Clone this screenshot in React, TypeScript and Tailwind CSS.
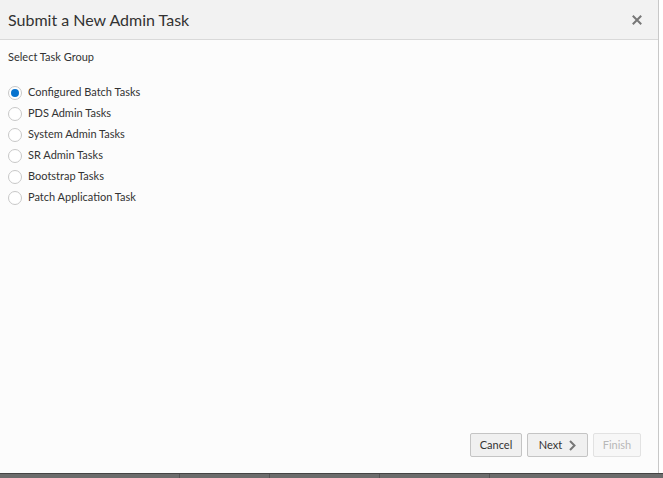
import { useState } from 'react'

const groups = [
  'Configured Batch Tasks',
  'PDS Admin Tasks',
  'System Admin Tasks',
  'SR Admin Tasks',
  'Bootstrap Tasks',
  'Patch Application Task',
]

function Radio({ checked }: { checked: boolean }) {
  return (
    <span className="flex h-[14px] w-[14px] items-center justify-center rounded-full border border-[#c8c8c8] bg-white">
      {checked && <span className="h-[8px] w-[8px] rounded-full bg-[#0572ce]" />}
    </span>
  )
}

export default function App() {
  const [selected, setSelected] = useState(0)

  return (
    <div
      className="flex h-[478px] w-[663px] flex-col overflow-hidden bg-white text-[#333]"
      style={{ fontFamily: 'Lato, "Open Sans", sans-serif' }}
    >
      <div className="flex h-[473px] w-[659px] flex-col border-r border-[#c8c8c8] bg-[#fcfcfc]">
        <div className="flex h-[40px] shrink-0 items-center justify-between border-b border-[#d9d9d9] bg-[#f2f2f2] pl-2 pr-[16px]">
          <h1 className="text-[16px] leading-none text-[#333]">Submit a New Admin Task</h1>
          <button>
            <svg width="10" height="10" viewBox="0 0 10 10">
              <path d="M1.5 1.5 L8.5 8.5 M8.5 1.5 L1.5 8.5" stroke="#777" strokeWidth="2" strokeLinecap="square" />
            </svg>
          </button>
        </div>

        <div className="flex flex-1 flex-col px-2 pt-[10px]">
          <p className="text-[11px] leading-[14px]">Select Task Group</p>
          <div className="mt-[18px] flex flex-col">
            {groups.map((g, i) => (
              <label
                key={g}
                onClick={() => setSelected(i)}
                className="flex h-[21px] cursor-pointer items-center gap-[6px] text-[11px]"
              >
                <Radio checked={selected === i} />
                <span>{g}</span>
              </label>
            ))}
          </div>
        </div>

        <div className="flex shrink-0 justify-end gap-[5px] pb-[16px] pr-[17px]">
          <button className="h-[24px] w-[52px] rounded-[2px] border border-[#c4c4c4] bg-[#f0f0f0] text-[11px] text-[#333]">
            Cancel
          </button>
          <button className="flex h-[24px] w-[61px] items-center justify-center gap-[7px] rounded-[2px] border border-[#c4c4c4] bg-[#f0f0f0] text-[11px] text-[#333]">
            Next
            <svg width="7" height="11" viewBox="0 0 7 11">
              <path d="M1 1 L5.5 5.5 L1 10" fill="none" stroke="#777" strokeWidth="2" />
            </svg>
          </button>
          <button
            disabled
            className="h-[24px] w-[48px] rounded-[2px] border border-[#e2e2e2] bg-[#f7f7f7] text-[11px] text-[#b8b8b8]"
          >
            Finish
          </button>
        </div>
      </div>

      <div className="flex h-[5px] shrink-0 border-t border-[#444] bg-[#6c6c6c]">
        <div className="w-[180px] border-r border-[#555]" />
        <div className="w-[90px] border-r border-[#555]" />
        <div className="w-[110px] border-r border-[#555]" />
        <div className="w-[110px] border-r border-[#555]" />
      </div>
    </div>
  )
}
